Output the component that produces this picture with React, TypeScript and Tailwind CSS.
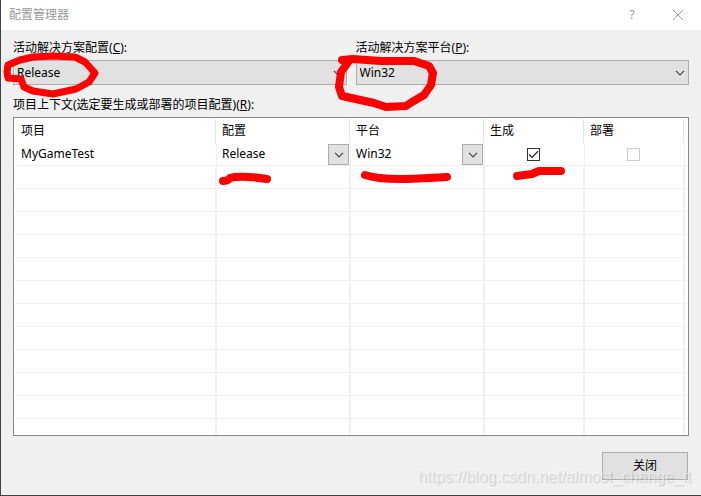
import type { ReactNode } from 'react';

const EMPTY_ROWS = Array.from({ length: 11 }, (_, i) => i);

function Chevron() {
  return (
    <svg width="10" height="6" viewBox="0 0 10 6" fill="none" stroke="#444" strokeWidth="1.2" aria-hidden="true">
      <path d="M1 0.8 L5 4.8 L9 0.8" />
    </svg>
  );
}

function SolutionSelect({ id, label, hotkey, value }: { id: string; label: string; hotkey: string; value: string }) {
  return (
    <div className="flex min-w-0 flex-1 flex-col">
      <label htmlFor={id} className="h-6 leading-6">
        {label}(<span className="underline">{hotkey}</span>):
      </label>
      <div className="relative">
        <select
          id={id}
          defaultValue={value}
          className="block h-[25px] w-full appearance-none border border-[#adadad] bg-[#e1e1e1] pl-[3px] text-[12px] leading-4"
        >
          <option>{value}</option>
        </select>
        <span className="pointer-events-none absolute inset-y-0 right-1 flex items-center">
          <Chevron />
        </span>
      </div>
    </div>
  );
}

function HeaderCell({ children }: { children: ReactNode }) {
  return (
    <th scope="col" className="p-0 pr-px text-left font-normal first:pl-px">
      <div className="h-6 border-r border-[#e5e5e5] pl-[5px] leading-6">{children}</div>
    </th>
  );
}

function CellSelect({ label, value }: { label: string; value: string }) {
  return (
    <td className="border-r border-b border-[#f0f0f0] p-0">
      <div className="relative h-[22px]">
        <select
          aria-label={label}
          defaultValue={value}
          className="block h-[22px] w-full appearance-none bg-white pl-[5px] text-[12px] leading-4"
        >
          <option>{value}</option>
        </select>
        <span className="pointer-events-none absolute right-px bottom-0 flex size-[21px] items-center justify-center border border-[#adadad] bg-[#e1e1e1]">
          <Chevron />
        </span>
      </div>
    </td>
  );
}

function CellCheck({ label, checked, disabled }: { label: string; checked?: boolean; disabled?: boolean }) {
  return (
    <td className="border-r border-b border-[#f0f0f0] p-0">
      <div className="flex h-[22px] items-center justify-center pr-0.5">
        <span className="relative block size-[13px]">
          <input
            type="checkbox"
            aria-label={label}
            defaultChecked={checked}
            disabled={disabled}
            className="block size-[13px] appearance-none border border-[#333] bg-white disabled:border-[#ccc]"
          />
          {checked && (
            <svg
              className="pointer-events-none absolute inset-0"
              width="13"
              height="13"
              viewBox="0 0 13 13"
              fill="none"
              stroke="#333"
              strokeWidth="1.3"
              aria-hidden="true"
            >
              <path d="M2 6.5 L5 9.5 L11 3.2" />
            </svg>
          )}
        </span>
      </div>
    </td>
  );
}

function Annotations() {
  return (
    <svg
      className="pointer-events-none absolute top-0 -left-px"
      width="701"
      height="496"
      viewBox="0 0 701 496"
      fill="none"
      stroke="#fe0000"
      strokeWidth="8"
      strokeLinecap="round"
      strokeLinejoin="round"
      aria-hidden="true"
    >
      <path strokeWidth="7" d="M8 78 L7 72 L8 65 L20 60 L33 57 L53 56 L75 57 L85 62 L95 73 L89 82 L76 89 L53 94 L33 91 L24 87 L21 79 Z" />
      <path d="M342 60 L353 59 L381 61 L414 61 L429 66 L433 73 L431 85 L424 95 L412 102 L406 106 L386 107 L374 103 L342 96 L339 87 L341 72 L349 61" />
      <path d="M223 181 Q228 181 230 178 Q240 175 267 179" />
      <path d="M365 175 Q377 179 400 179 Q412 179 447 177" />
      <path d="M517 176 L532 174 L539 171 L561 171" />
    </svg>
  );
}

export default function App() {
  return (
    <div className="relative flex min-h-screen flex-col border-b border-l border-[#444] bg-[#f0f0f0] font-['Noto_Sans','Noto_Sans_CJK_SC',sans-serif] text-[12px] text-black">
      <header className="flex h-[30px] items-center justify-between bg-white pr-[17px] pl-2 text-[#999]">
        <h1>配置管理器</h1>
        <div className="flex items-center gap-9">
          <button type="button" aria-label="帮助" className="w-2 text-[12px]">
            ?
          </button>
          <button type="button" aria-label="关闭窗口">
            <svg width="12" height="12" viewBox="0 0 12 12" fill="none" stroke="#999" aria-hidden="true">
              <path d="M1 1 L11 11 M11 1 L1 11" />
            </svg>
          </button>
        </div>
      </header>

      <main className="flex flex-1 flex-col px-3 pt-1.5">
        <div className="flex gap-[9px]">
          <SolutionSelect id="config" label="活动解决方案配置" hotkey="C" value="Release" />
          <SolutionSelect id="platform" label="活动解决方案平台" hotkey="P" value="Win32" />
        </div>

        <h2 className="mt-2 h-6 leading-6">
          项目上下文(选定要生成或部署的项目配置)(<span className="underline">R</span>):
        </h2>

        <div className="h-[319px] overflow-hidden border border-[#828790] bg-white p-px">
          <table className="w-full table-fixed border-separate border-spacing-0">
            <colgroup>
              <col />
              <col className="w-[134px]" />
              <col className="w-[134px]" />
              <col className="w-[100px]" />
              <col className="w-[100px]" />
              <col className="w-[2px]" />
            </colgroup>
            <thead>
              <tr>
                <HeaderCell>项目</HeaderCell>
                <HeaderCell>配置</HeaderCell>
                <HeaderCell>平台</HeaderCell>
                <HeaderCell>生成</HeaderCell>
                <HeaderCell>部署</HeaderCell>
                <td className="p-0" />
              </tr>
            </thead>
            <tbody>
              <tr>
                <td className="h-[23px] border-r border-b border-[#f0f0f0] p-0 pl-1.5 leading-4">MyGameTest</td>
                <CellSelect label="配置" value="Release" />
                <CellSelect label="平台" value="Win32" />
                <CellCheck label="生成" checked />
                <CellCheck label="部署" disabled />
                <td className="border-b border-[#f0f0f0] p-0" />
              </tr>
              {EMPTY_ROWS.map((row) => (
                <tr key={row} className="h-[23px]">
                  {[0, 1, 2, 3, 4].map((col) => (
                    <td key={col} className="border-r-2 border-b border-[#f0f0f0] border-r-[#edf0f5] p-0" />
                  ))}
                  <td className="border-b border-[#f0f0f0] p-0" />
                </tr>
              ))}
              <tr className="h-4">
                {[0, 1, 2, 3, 4].map((col) => (
                  <td key={col} className="border-r-2 border-r-[#edf0f5] p-0" />
                ))}
                <td className="p-0" />
              </tr>
            </tbody>
          </table>
        </div>

        <div className="mt-4 flex justify-end pr-px">
          <button type="button" className="h-7 w-[86px] border border-[#adadad] bg-[#e1e1e1]">
            关闭
          </button>
        </div>
      </main>

      <p className="pointer-events-none absolute right-2.5 bottom-2 font-['Liberation_Sans',Arial,sans-serif] text-[16px] leading-5 text-white/45 [text-shadow:1px_1px_1px_rgba(0,0,0,0.16)]">
        https://blog.csdn.net/almost_change_it
      </p>
      <Annotations />
    </div>
  );
}
